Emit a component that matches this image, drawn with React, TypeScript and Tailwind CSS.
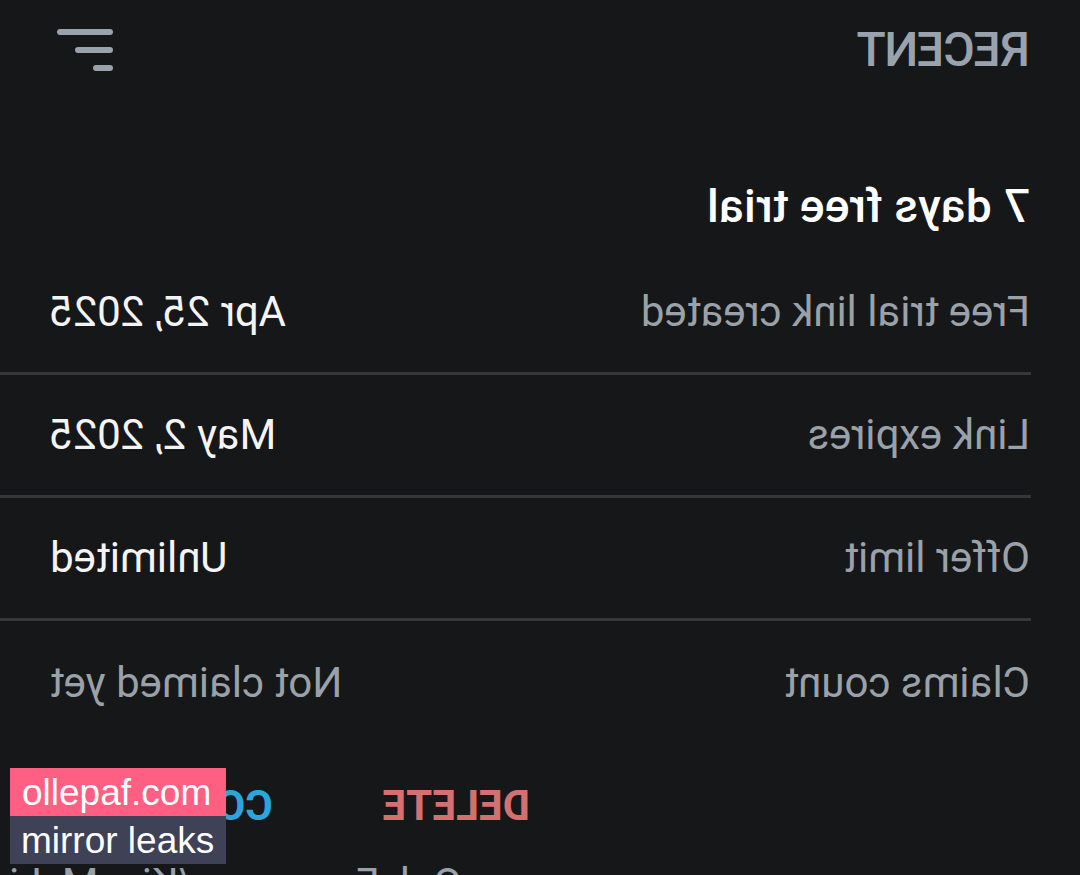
const rows = [
  { label: "Free trial link created", value: "Apr 25, 2025", muted: false },
  { label: "Link expires", value: "May 2, 2025", muted: false },
  { label: "Offer limit", value: "Unlimited", muted: false },
  { label: "Claims count", value: "Not claimed yet", muted: true },
];

function FilterIcon() {
  return (
    <svg width="60" height="48" viewBox="0 0 60 48" fill="none">
      <g stroke="#9aa3ad" strokeWidth="6" strokeLinecap="round">
        <line x1="4" y1="6" x2="54" y2="6" />
        <line x1="4" y1="24" x2="36" y2="24" />
        <line x1="4" y1="42" x2="18" y2="42" />
      </g>
    </svg>
  );
}

export default function App() {
  return (
    <div className="relative w-[1080px] h-[875px] overflow-hidden bg-[#161719]">
      {/* the capture is mirrored, so the whole screen is flipped */}
      <div className="-scale-x-100 w-full h-full font-['Roboto',sans-serif]">
        {/* Header */}
        <div className="h-[100px] flex items-center justify-between pl-[50px] pr-[54px]">
          <span className="text-[48px] leading-none font-medium text-[#9aa3ad] tracking-[-1px]">RECENT</span>
          <FilterIcon />
        </div>

        {/* Title */}
        <div className="mt-[76px] h-[60px] flex items-center pl-[50px]">
          <h1 className="text-[46px] leading-none font-medium text-white tracking-[0.3px]">7 days free trial</h1>
        </div>

        {/* Detail rows */}
        <div className="mt-[16px]">
          {rows.map((row, idx) => (
            <div
              key={idx}
              className={`ml-[49px] pr-[50px] h-[123px] flex items-center justify-between ${
                idx < rows.length - 1 ? "border-b-[3px] border-[#33383d]" : ""
              }`}
            >
              <span className="pl-px text-[42px] leading-none text-[#9aa1a9]">{row.label}</span>
              <span className={`text-[42px] leading-none ${row.muted ? "text-[#9aa1a9]" : "text-[#f4f4f4]"}`}>
                {row.value}
              </span>
            </div>
          ))}
        </div>

        {/* Actions */}
        <div className="h-[124px] flex items-center pl-[550px] gap-[110px]">
          <button className="text-[42px] leading-none font-bold text-[#d4716f]">DELETE</button>
          <button className="text-[42px] leading-none font-bold text-[#2aa6dd] whitespace-nowrap">COPY LINK</button>
        </div>

        <div className="-mt-[5px] pl-[618px] text-[42px] leading-none text-[#9aa1a9] whitespace-nowrap">
          OnlyFans.com/KissMyLips
        </div>
      </div>

      {/* Watermark sits on top, not mirrored */}
      <div className="absolute left-[10px] top-[768px] w-[216px] font-['Liberation_Sans',Arial,sans-serif] text-[37px] leading-none text-white">
        <div className="h-[48px] bg-[#ff5f82] flex items-center pl-[12px]">ollepaf.com</div>
        <div className="h-[48px] bg-[#3f4157] flex items-center pl-[11px]">mirror leaks</div>
      </div>
    </div>
  );
}
